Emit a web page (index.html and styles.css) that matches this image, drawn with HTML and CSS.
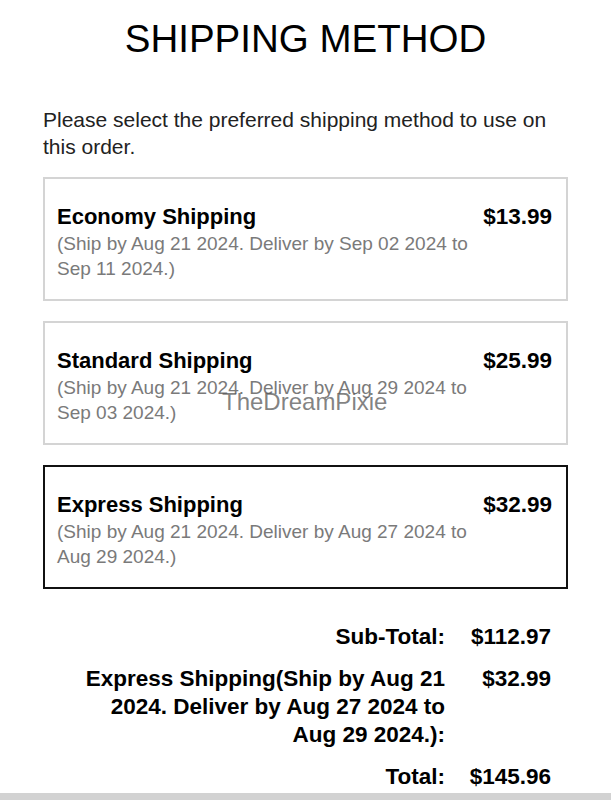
FILE: index.html
```html
<!DOCTYPE html>
<html lang="en">
<head>
    <meta charset="UTF-8">
    <meta name="viewport" content="width=device-width, initial-scale=1.0">
    <title>Shipping Method</title>
    <link rel="stylesheet" href="styles.css">
</head>
<body>

  <div class="page">
    <h1 class="page-title">SHIPPING METHOD</h1>

    <p class="intro">Please select the preferred shipping method to use on this order.</p>

    <!-- Shipping options -->
    <div class="options">
      <label class="option">
        <div class="option-info">
          <div class="option-name">Economy Shipping</div>
          <div class="option-dates">(Ship by Aug 21 2024. Deliver by Sep 02 2024 to Sep 11 2024.)</div>
        </div>
        <div class="option-price">$13.99</div>
      </label>

      <label class="option">
        <div class="option-info">
          <div class="option-name">Standard Shipping</div>
          <div class="option-dates">(Ship by Aug 21 2024. Deliver by Aug 29 2024 to Sep 03 2024.)</div>
        </div>
        <div class="option-price">$25.99</div>
        <span class="watermark">TheDreamPixie</span>
      </label>

      <label class="option selected">
        <div class="option-info">
          <div class="option-name">Express Shipping</div>
          <div class="option-dates">(Ship by Aug 21 2024. Deliver by Aug 27 2024 to Aug 29 2024.)</div>
        </div>
        <div class="option-price">$32.99</div>
      </label>
    </div>

    <!-- Order totals -->
    <div class="totals">
      <div class="totals-label">Sub-Total:</div>
      <div class="totals-value">$112.97</div>

      <div class="totals-label">Express Shipping(Ship by Aug 21 2024. Deliver by Aug 27 2024 to Aug 29 2024.):</div>
      <div class="totals-value">$32.99</div>

      <div class="totals-label">Total:</div>
      <div class="totals-value">$145.96</div>
    </div>
  </div>

  <div class="footer-bar"></div>

</body>
</html>
```

FILE: styles.css
```css
body {
  margin: 0;
  background-color: #fff;
  color: #000;
  font-family: "Liberation Sans", Arial, sans-serif;
}

.page {
  padding: 0 43px;
}

.page-title {
  margin: 0;
  padding-top: 17px;
  font-size: 38.5px;
  font-weight: normal;
  line-height: 44px;
  text-align: center;
}

.intro {
  margin: 45px 0 17px;
  font-size: 21px;
  line-height: 27px;
  color: #222;
}

.options {
  display: flex;
  flex-direction: column;
  gap: 20px;
}

.option {
  position: relative;
  display: flex;
  justify-content: space-between;
  align-items: flex-start;
  padding: 24px 14px 18px 12px;
  border: 2px solid #d4d4d4;
  cursor: pointer;
}

.option.selected {
  border-color: #111;
}

.option-info {
  max-width: 430px;
}

.option-name {
  font-size: 22px;
  font-weight: bold;
  line-height: 28px;
}

.option-dates {
  font-size: 19px;
  line-height: 25px;
  color: #7a7a7a;
}

.option-price {
  font-size: 22.5px;
  font-weight: bold;
  line-height: 28px;
}

.watermark {
  position: absolute;
  left: 177px;
  top: 65px;
  font-size: 24px;
  color: rgba(90, 90, 90, 0.75);
  pointer-events: none;
}

.totals {
  display: grid;
  grid-template-columns: 1fr 370px 82px;
  column-gap: 24px;
  row-gap: 14px;
  margin-top: 34px;
  padding-right: 17px;
  font-size: 22.5px;
  font-weight: bold;
  line-height: 28px;
}

.totals-label {
  grid-column: 2;
  text-align: right;
}

.totals-value {
  grid-column: 3;
  text-align: right;
}

.footer-bar {
  position: fixed;
  left: 0;
  right: 0;
  bottom: 0;
  height: 7px;
  background-color: #d2d2d2;
}
```
